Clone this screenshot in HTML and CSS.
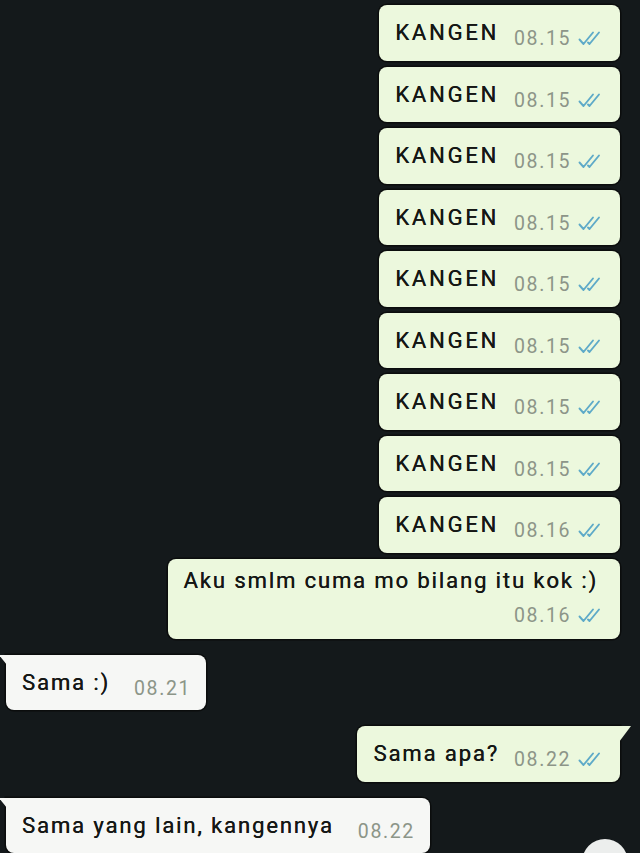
FILE: index.html
```html
<!DOCTYPE html>
<html>
<head>
<meta charset="utf-8">
<link rel="stylesheet" href="styles.css">
</head>
<body>
<div class="chat">
  <div class="msg out"><span class="text caps">KANGEN</span><span class="meta"><span class="time">08.15</span><svg class="ticks" viewBox="0 0 27 15"><path d="M1.5 8.5 L5.5 13 L15 1.5 M10 11.5 L11.5 13 L21 1.5" /></svg></span></div>
  <div class="msg out"><span class="text caps">KANGEN</span><span class="meta"><span class="time">08.15</span><svg class="ticks" viewBox="0 0 27 15"><path d="M1.5 8.5 L5.5 13 L15 1.5 M10 11.5 L11.5 13 L21 1.5" /></svg></span></div>
  <div class="msg out"><span class="text caps">KANGEN</span><span class="meta"><span class="time">08.15</span><svg class="ticks" viewBox="0 0 27 15"><path d="M1.5 8.5 L5.5 13 L15 1.5 M10 11.5 L11.5 13 L21 1.5" /></svg></span></div>
  <div class="msg out"><span class="text caps">KANGEN</span><span class="meta"><span class="time">08.15</span><svg class="ticks" viewBox="0 0 27 15"><path d="M1.5 8.5 L5.5 13 L15 1.5 M10 11.5 L11.5 13 L21 1.5" /></svg></span></div>
  <div class="msg out"><span class="text caps">KANGEN</span><span class="meta"><span class="time">08.15</span><svg class="ticks" viewBox="0 0 27 15"><path d="M1.5 8.5 L5.5 13 L15 1.5 M10 11.5 L11.5 13 L21 1.5" /></svg></span></div>
  <div class="msg out"><span class="text caps">KANGEN</span><span class="meta"><span class="time">08.15</span><svg class="ticks" viewBox="0 0 27 15"><path d="M1.5 8.5 L5.5 13 L15 1.5 M10 11.5 L11.5 13 L21 1.5" /></svg></span></div>
  <div class="msg out"><span class="text caps">KANGEN</span><span class="meta"><span class="time">08.15</span><svg class="ticks" viewBox="0 0 27 15"><path d="M1.5 8.5 L5.5 13 L15 1.5 M10 11.5 L11.5 13 L21 1.5" /></svg></span></div>
  <div class="msg out"><span class="text caps">KANGEN</span><span class="meta"><span class="time">08.15</span><svg class="ticks" viewBox="0 0 27 15"><path d="M1.5 8.5 L5.5 13 L15 1.5 M10 11.5 L11.5 13 L21 1.5" /></svg></span></div>
  <div class="msg out"><span class="text caps">KANGEN</span><span class="meta"><span class="time">08.16</span><svg class="ticks" viewBox="0 0 27 15"><path d="M1.5 8.5 L5.5 13 L15 1.5 M10 11.5 L11.5 13 L21 1.5" /></svg></span></div>
  <div class="msg out long"><span class="text">Aku smlm cuma mo bilang itu kok :)</span><span class="meta"><span class="time">08.16</span><svg class="ticks" viewBox="0 0 27 15"><path d="M1.5 8.5 L5.5 13 L15 1.5 M10 11.5 L11.5 13 L21 1.5" /></svg></span></div>
  <div class="msg in tail-left gap-top"><span class="text">Sama :)</span><span class="meta"><span class="time">08.21</span></span></div>
  <div class="msg out tail-right gap-top"><span class="text">Sama apa?</span><span class="meta"><span class="time">08.22</span><svg class="ticks" viewBox="0 0 27 15"><path d="M1.5 8.5 L5.5 13 L15 1.5 M10 11.5 L11.5 13 L21 1.5" /></svg></span></div>
  <div class="msg in tail-left gap-top"><span class="text">Sama yang lain, kangennya</span><span class="meta"><span class="time">08.22</span></span></div>
</div>
<div class="scroll-btn"></div>
</body>
</html>
```

FILE: styles.css
```css
html, body {
  margin: 0;
  padding: 0;
  background: #14191b;
  height: 100%;
  overflow: hidden;
  font-family: Roboto, "Liberation Sans", sans-serif;
}

.chat {
  display: flex;
  flex-direction: column;
  gap: 6px;
  padding: 5px 20px 0 6px;
}

.msg {
  position: relative;
  display: flex;
  align-items: baseline;
  box-sizing: border-box;
  height: 55.5px;
  padding: 15px 15px 0 16px;
  border-radius: 8px;
  box-shadow: 0 0 0 1.5px #0b0d0d;
}

.msg.out {
  align-self: flex-end;
  background: #ecf8dd;
}

.msg.in {
  align-self: flex-start;
  background: #f6f7f5;
}

.gap-top {
  margin-top: 10px;
}

.text {
  font-size: 22px;
  font-weight: 400;
  color: #151715;
  letter-spacing: 1.9px;
  text-shadow: 0.3px 0 0 #151715;
}

.text.caps {
  letter-spacing: 2.8px;
}

.meta {
  display: flex;
  align-items: center;
  gap: 7px;
  margin-left: 15px;
}

.msg.in .meta {
  margin-left: 24px;
}

.time {
  font-size: 19.5px;
  color: #8c9588;
  letter-spacing: 1.6px;
  position: relative;
  top: 5px;
}

.ticks {
  width: 27px;
  height: 15px;
  position: relative;
  top: 5px;
}

.ticks path {
  fill: none;
  stroke: #5eaac8;
  stroke-width: 1.9;
  stroke-linecap: round;
  stroke-linejoin: round;
}

.msg.long {
  flex-direction: column;
  align-items: flex-start;
  height: 80px;
  padding: 9px 22px 0 16px;
}

.msg.long .meta {
  align-self: flex-end;
  margin: 6px -7px 0 0;
}

.tail-left {
  border-top-left-radius: 0;
}

.tail-left::before {
  content: "";
  position: absolute;
  left: -7px;
  top: 0;
  border-top: 10px solid #f6f7f5;
  border-left: 8px solid transparent;
}

.tail-right {
  border-top-right-radius: 0;
}

.tail-right::after {
  content: "";
  position: absolute;
  right: -11px;
  top: 0;
  border-top: 16px solid #ecf8dd;
  border-right: 12px solid transparent;
}

.scroll-btn {
  position: absolute;
  left: 582px;
  top: 839px;
  width: 46px;
  height: 46px;
  border-radius: 50%;
  background: #eceeed;
}
```
